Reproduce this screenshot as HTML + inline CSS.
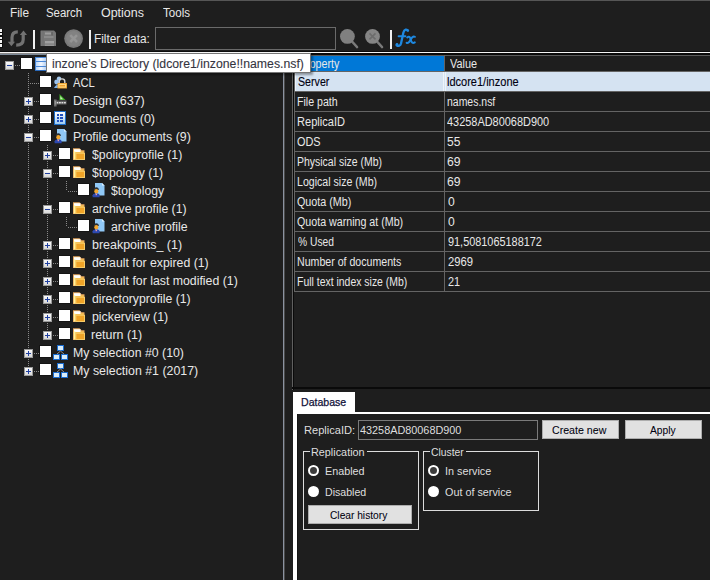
<!DOCTYPE html><html><head><meta charset="utf-8"><style>
*{margin:0;padding:0;box-sizing:content-box}
html,body{width:710px;height:580px;overflow:hidden;background:#1e1e1e}
body{position:relative;font-family:"Liberation Sans", sans-serif;font-size:12px}
.t{position:absolute;line-height:0;white-space:nowrap;transform-origin:0 0}
.sep{position:absolute;top:30px;width:2px;height:19px;background:#f0f0f0}
.grip{position:absolute;left:0;top:29.4px;width:2px;height:19px;background:repeating-linear-gradient(#f4f4f4 0 2.6px,#0e0e0e 2.6px 3.8px);box-shadow:1px 0 #0e0e0e}
.cb{position:absolute;width:11px;height:11px;background:#fff;box-shadow:0 0 0 1px #141414}
.ex{position:absolute;width:7px;height:7px;border:1px solid #9a9a9a;background:linear-gradient(#fafafa,#d8d8d8)}
.mn{position:absolute;left:1px;top:3px;width:5px;height:1px;background:#2040a0}
.pl{position:absolute;left:3px;top:1px;width:1px;height:5px;background:#2040a0}
.vd{position:absolute;width:1px;background:repeating-linear-gradient(#8a8a8a 0 1px,transparent 1px 2px)}
.hd{position:absolute;height:1px;background:repeating-linear-gradient(90deg,#8a8a8a 0 1px,transparent 1px 2px)}
.btn{position:absolute;background:#e1e1e1;border:1px solid #adadad}
</style></head><body><div style="position:absolute;left:0px;top:0px;width:710px;height:1px;background:#565656;"></div>
<div class="t" style="left:9.63px;top:13px;font-size:12px;color:#e8e8e8;transform:scaleX(0.9877);">File</div>
<div class="t" style="left:46.48px;top:13px;font-size:12px;color:#e8e8e8;transform:scaleX(0.9512);">Search</div>
<div class="t" style="left:101.01px;top:13px;font-size:12px;color:#e8e8e8;transform:scaleX(1.0382);">Options</div>
<div class="t" style="left:162.64px;top:13px;font-size:12px;color:#e8e8e8;transform:scaleX(0.9630);">Tools</div>
<div class="grip"></div>
<svg style="position:absolute;left:7px;top:29px" width="21" height="19" viewBox="0 0 21 19">
<path d="M10.8 2.9 Q5 2.9 5 8.5 L5 13.5" stroke="#727272" stroke-width="3.2" fill="none"/>
<path d="M0.8 12.8 L8 12.8 L4.4 17.2 Z" fill="#727272"/>
<path d="M9.2 16.2 Q16.2 16.2 16.2 10.5 L16.2 5.5" stroke="#727272" stroke-width="3.2" fill="none"/>
<path d="M12.8 6 L20 6 L16.5 1.5 Z" fill="#727272"/>
</svg>
<div class="sep" style="left:33px"></div>
<svg style="position:absolute;left:40px;top:30px" width="17" height="17" viewBox="0 0 17 17">
<path d="M0.5 1 Q0.5 0.5 1 0.5 L14 0.5 L16 2.5 L16 15.5 Q16 16 15.5 16 L1 16 Q0.5 16 0.5 15.5 Z" fill="#787878"/>
<rect x="2.5" y="1" width="1" height="15" fill="#6e6e6e"/>
<rect x="5" y="2.5" width="6" height="2" fill="#9c9c9c"/>
<rect x="11.5" y="2" width="1.2" height="3.5" fill="#5e5e5e"/>
<rect x="4" y="6" width="9.5" height="2" fill="#8a8a8a"/>
<rect x="5" y="11" width="9" height="2.5" fill="#a0a0a0"/>
<rect x="5" y="14.5" width="9" height="1.5" fill="#969696"/>
</svg>
<svg style="position:absolute;left:64px;top:29px" width="20" height="20" viewBox="0 0 20 20">
<circle cx="9.6" cy="9.6" r="9.4" fill="#7a7a7a"/>
<circle cx="9.6" cy="9.6" r="7.5" fill="#828282"/>
<path d="M6.2 6.2 L13 13 M13 6.2 L6.2 13" stroke="#959595" stroke-width="2.6"/>
</svg>
<div class="sep" style="left:89px"></div>
<div class="t" style="left:94.43px;top:39px;font-size:12px;color:#e8e8e8;transform:scaleX(0.9850);">Filter data:</div>
<div style="position:absolute;left:155px;top:27px;width:179px;height:21px;border:1px solid #6a6a6a"></div>
<svg style="position:absolute;left:339px;top:28px" width="20" height="21" viewBox="0 0 20 21">
<path d="M13 13.5 L18 19" stroke="#7a7a7a" stroke-width="2.6" stroke-linecap="round"/>
<circle cx="8.4" cy="8.4" r="7.4" fill="#808080"/>
</svg>
<svg style="position:absolute;left:364px;top:28px" width="20" height="21" viewBox="0 0 20 21">
<path d="M13 13.5 L18 19" stroke="#7a7a7a" stroke-width="2.6" stroke-linecap="round"/>
<circle cx="8.5" cy="8.4" r="7.4" fill="#858585"/>
<path d="M5.5 5.4 L11.5 11.4 M11.5 5.4 L5.5 11.4" stroke="#6c6c6c" stroke-width="1.6"/>
</svg>
<div class="sep" style="left:390px"></div>
<svg style="position:absolute;left:386px;top:24px" width="36" height="28" viewBox="0 0 36 28">
<g stroke="#1e88e0" fill="none" stroke-linecap="round">
<path d="M22 6.6 C21 5 18.3 5 17.4 8.5 L15 19.5 C14.4 22 12.3 22.4 10.6 21.2" stroke-width="2.3"/>
<path d="M12.6 12.3 L19.4 12.3" stroke-width="2"/>
<path d="M21.2 13.4 Q23.8 11.2 24.8 15.8 Q25.8 20.2 28.8 18.4" stroke-width="2"/>
<path d="M28.9 12.8 Q26.6 11.8 24.6 15.8 Q22.6 19.8 20.6 18.8" stroke-width="2"/>
</g>
<circle cx="21.6" cy="6.4" r="1.2" fill="#1e88e0"/><circle cx="11" cy="20.4" r="1.4" fill="#1e88e0"/>
</svg>
<div style="position:absolute;left:0px;top:51px;width:710px;height:1px;background:#0c0c0c;"></div>
<div style="position:absolute;left:0px;top:52px;width:710px;height:1px;background:#f4f4f4;"></div>
<div style="position:absolute;left:0px;top:53px;width:294px;height:1px;background:#8a8a8a;"></div>
<div style="position:absolute;left:0px;top:54px;width:283px;height:1px;background:#7d8a98;"></div>
<div style="position:absolute;left:294px;top:53px;width:416px;height:2px;background:#0a0a0a;"></div>
<div style="position:absolute;left:294px;top:55px;width:416px;height:1px;background:#5a5a5a;"></div>
<div style="position:absolute;left:283px;top:53px;width:1px;height:527px;background:#8a92a0;"></div>
<div style="position:absolute;left:284px;top:53px;width:1px;height:527px;background:#4a4a4a;"></div>
<div style="position:absolute;left:292px;top:53px;width:1px;height:337px;background:#606060;"></div>
<div style="position:absolute;left:293px;top:53px;width:1px;height:337px;background:#0a0a0a;"></div>
<div class="vd" style="left:28px;top:73px;height:298px"></div>
<div class="vd" style="left:47px;top:145px;height:190px"></div>
<div class="vd" style="left:66px;top:181px;height:10px"></div>
<div class="vd" style="left:66px;top:217px;height:10px"></div>
<div class="hd" style="left:15px;top:65px;width:5px"></div>
<div class="ex" style="left:5px;top:61px"><div class="mn"></div></div>
<div class="cb" style="left:21px;top:58px"></div>
<div style="position:absolute;left:35px;top:57px;line-height:0"><svg width="12" height="14" viewBox="0 0 12 14"><defs><linearGradient id="gb" x1="0" x2="1"><stop offset="0" stop-color="#b8d4f4"/><stop offset="0.45" stop-color="#f4f8ff"/><stop offset="1" stop-color="#a8c8ee"/></linearGradient></defs><rect x="0" y="0" width="12" height="14" fill="#4a88d8"/>
<rect x="1" y="1" width="11" height="3" fill="url(#gb)"/><rect x="1" y="5" width="11" height="4" fill="url(#gb)"/><rect x="1" y="10" width="11" height="3" fill="url(#gb)"/><rect x="0" y="13" width="12" height="1" fill="#2a68b8"/></svg></div>
<div class="hd" style="left:30px;top:83px;width:9px"></div>
<div class="cb" style="left:40px;top:76px"></div>
<div style="position:absolute;left:54px;top:76px;line-height:0"><svg width="14" height="13" viewBox="0 0 14 13"><circle cx="5" cy="2.6" r="2.2" fill="#a8ccf0"/><circle cx="2.6" cy="6" r="2.4" fill="#98c0ec"/><path d="M0 12 Q2.5 7 6 9 L6 12Z" fill="#7aaee6"/>
<path d="M5.2 7.5 V5.5 A2.8 2.6 0 0 1 10.8 5.5 V7.5" stroke="#d4d4d4" stroke-width="1.4" fill="none"/><rect x="3.5" y="7" width="9.5" height="5.5" fill="#e89a28"/><rect x="4.3" y="7.8" width="7.9" height="3.9" fill="#ffd880"/><rect x="5.5" y="9" width="5.5" height="1.5" fill="#f0a030"/></svg></div>
<div class="t" style="left:73.37px;top:83px;font-size:12px;color:#e8e8e8;transform:scaleX(0.9337);">ACL</div>
<div class="hd" style="left:34px;top:101px;width:5px"></div>
<div class="ex" style="left:24px;top:97px"><div class="mn"></div><div class="pl"></div></div>
<div class="cb" style="left:40px;top:94px"></div>
<div style="position:absolute;left:54px;top:94px;line-height:0"><svg width="13" height="13" viewBox="0 0 13 13"><path d="M5.5 0 L5.5 6 L11.5 6 Z" fill="#40b028"/><path d="M6.3 2 L6.3 5.2 L9 5.2Z" fill="#c8f0b8"/>
<rect x="1" y="6.5" width="11.5" height="4" fill="#606060"/><rect x="2.5" y="8" width="1.8" height="1.4" fill="#e0e0e0"/><rect x="5" y="8" width="1.8" height="1.4" fill="#e0e0e0"/><rect x="7.5" y="8" width="1.8" height="1.4" fill="#e0e0e0"/><rect x="10" y="8" width="1.8" height="1.4" fill="#e0e0e0"/><rect x="0" y="5.5" width="2.6" height="7" fill="#6e6e6e"/><rect x="0.8" y="7" width="1" height="3.5" fill="#a0a0a0"/></svg></div>
<div class="t" style="left:72.58px;top:101px;font-size:12px;color:#e8e8e8;transform:scaleX(1.0451);">Design (637)</div>
<div class="hd" style="left:34px;top:119px;width:5px"></div>
<div class="ex" style="left:24px;top:115px"><div class="mn"></div><div class="pl"></div></div>
<div class="cb" style="left:40px;top:112px"></div>
<div style="position:absolute;left:54px;top:111px;line-height:0"><svg width="13" height="14" viewBox="0 0 13 14"><defs><linearGradient id="gd" x1="0" y1="0" x2="0" y2="1"><stop offset="0" stop-color="#ffffff"/><stop offset="1" stop-color="#9ccaf0"/></linearGradient></defs><rect x="0" y="0" width="12" height="14" fill="#1c6cc8"/><rect x="1" y="1" width="10" height="12" fill="url(#gd)"/>
<rect x="3" y="3" width="2" height="2" fill="#2050c0"/><rect x="6" y="3" width="3" height="2" fill="#2050c0"/><rect x="3" y="6" width="2" height="2" fill="#2050c0"/><rect x="6" y="6" width="3" height="2" fill="#2050c0"/><rect x="3" y="9" width="2" height="2" fill="#2050c0"/><rect x="6" y="9" width="3" height="2" fill="#2050c0"/></svg></div>
<div class="t" style="left:72.58px;top:119px;font-size:12px;color:#e8e8e8;transform:scaleX(1.0420);">Documents (0)</div>
<div class="hd" style="left:34px;top:137px;width:5px"></div>
<div class="ex" style="left:24px;top:133px"><div class="mn"></div></div>
<div class="cb" style="left:40px;top:130px"></div>
<div style="position:absolute;left:54px;top:129px;line-height:0"><svg width="13" height="15" viewBox="0 0 13 15"><path d="M3 0 L10 0 L12.5 2.5 L12.5 12.5 L3 12.5 Z" fill="#90c8f6"/><path d="M10 0 L12.5 2.5 L10 2.5Z" fill="#e0f2ff"/>
<path d="M1.8 7 Q1.8 4.3 4.3 4.3 Q6.8 4.3 6.8 7 Z" fill="#2a3038"/><ellipse cx="4.3" cy="8.3" rx="2" ry="2.4" fill="#f4a830"/>
<path d="M0.6 14.2 L0.6 12.3 Q1 10.8 3 10.6 L5.6 10.6 Q7.4 10.8 7.6 12.3 L7.6 14.2 Z" fill="#2c48b0"/><rect x="3.6" y="10.6" width="1.4" height="1.6" fill="#e89aa8"/></svg></div>
<div class="t" style="left:72.59px;top:137px;font-size:12px;color:#e8e8e8;transform:scaleX(1.0328);">Profile documents (9)</div>
<div class="hd" style="left:53px;top:155px;width:5px"></div>
<div class="ex" style="left:43px;top:151px"><div class="mn"></div><div class="pl"></div></div>
<div class="cb" style="left:59px;top:148px"></div>
<div style="position:absolute;left:73px;top:148px;line-height:0"><svg width="13" height="13" viewBox="0 0 13 13"><path d="M0 0.3 L6.5 0.3 L8.5 2.3 L11.5 2.3 L11.5 12 L0 12 Z" fill="#e8a860"/>
<path d="M1 1.2 L6.2 1.2 L8 3.2 L10.6 3.2 L10.6 11 L1 11 Z" fill="#f6c050"/><rect x="1" y="1.2" width="6.5" height="2.8" fill="#ffffff"/>
<rect x="0.8" y="3.5" width="1.6" height="8" fill="#fff49a"/>
<rect x="2.4" y="4.8" width="9.6" height="7.2" fill="#f8cc68"/><rect x="3.4" y="5.8" width="7.6" height="5.2" fill="#f0a428"/></svg></div>
<div class="t" style="left:91.97px;top:155px;font-size:12px;color:#e8e8e8;transform:scaleX(1.0257);">$policyprofile (1)</div>
<div class="hd" style="left:53px;top:173px;width:5px"></div>
<div class="ex" style="left:43px;top:169px"><div class="mn"></div></div>
<div class="cb" style="left:59px;top:166px"></div>
<div style="position:absolute;left:73px;top:166px;line-height:0"><svg width="13" height="13" viewBox="0 0 13 13"><path d="M0 0.3 L6.5 0.3 L8.5 2.3 L11.5 2.3 L11.5 12 L0 12 Z" fill="#e8a860"/>
<path d="M1 1.2 L6.2 1.2 L8 3.2 L10.6 3.2 L10.6 11 L1 11 Z" fill="#f6c050"/><rect x="1" y="1.2" width="6.5" height="2.8" fill="#ffffff"/>
<rect x="0.8" y="3.5" width="1.6" height="8" fill="#fff49a"/>
<rect x="2.4" y="4.8" width="9.6" height="7.2" fill="#f8cc68"/><rect x="3.4" y="5.8" width="7.6" height="5.2" fill="#f0a428"/></svg></div>
<div class="t" style="left:91.97px;top:173px;font-size:12px;color:#e8e8e8;transform:scaleX(1.0163);">$topology (1)</div>
<div class="hd" style="left:68px;top:191px;width:9px"></div>
<div class="cb" style="left:78px;top:184px"></div>
<div style="position:absolute;left:92px;top:183px;line-height:0"><svg width="13" height="15" viewBox="0 0 13 15"><path d="M3 0 L10 0 L12.5 2.5 L12.5 12.5 L3 12.5 Z" fill="#90c8f6"/><path d="M10 0 L12.5 2.5 L10 2.5Z" fill="#e0f2ff"/>
<path d="M1.8 7 Q1.8 4.3 4.3 4.3 Q6.8 4.3 6.8 7 Z" fill="#2a3038"/><ellipse cx="4.3" cy="8.3" rx="2" ry="2.4" fill="#f4a830"/>
<path d="M0.6 14.2 L0.6 12.3 Q1 10.8 3 10.6 L5.6 10.6 Q7.4 10.8 7.6 12.3 L7.6 14.2 Z" fill="#2c48b0"/><rect x="3.6" y="10.6" width="1.4" height="1.6" fill="#e89aa8"/></svg></div>
<div class="t" style="left:111.07px;top:191px;font-size:12px;color:#e8e8e8;transform:scaleX(1.0216);">$topology</div>
<div class="hd" style="left:53px;top:209px;width:5px"></div>
<div class="ex" style="left:43px;top:205px"><div class="mn"></div></div>
<div class="cb" style="left:59px;top:202px"></div>
<div style="position:absolute;left:73px;top:202px;line-height:0"><svg width="13" height="13" viewBox="0 0 13 13"><path d="M0 0.3 L6.5 0.3 L8.5 2.3 L11.5 2.3 L11.5 12 L0 12 Z" fill="#e8a860"/>
<path d="M1 1.2 L6.2 1.2 L8 3.2 L10.6 3.2 L10.6 11 L1 11 Z" fill="#f6c050"/><rect x="1" y="1.2" width="6.5" height="2.8" fill="#ffffff"/>
<rect x="0.8" y="3.5" width="1.6" height="8" fill="#fff49a"/>
<rect x="2.4" y="4.8" width="9.6" height="7.2" fill="#f8cc68"/><rect x="3.4" y="5.8" width="7.6" height="5.2" fill="#f0a428"/></svg></div>
<div class="t" style="left:91.58px;top:209px;font-size:12px;color:#e8e8e8;transform:scaleX(1.0202);">archive profile (1)</div>
<div class="hd" style="left:68px;top:227px;width:9px"></div>
<div class="cb" style="left:78px;top:220px"></div>
<div style="position:absolute;left:92px;top:219px;line-height:0"><svg width="13" height="15" viewBox="0 0 13 15"><path d="M3 0 L10 0 L12.5 2.5 L12.5 12.5 L3 12.5 Z" fill="#90c8f6"/><path d="M10 0 L12.5 2.5 L10 2.5Z" fill="#e0f2ff"/>
<path d="M1.8 7 Q1.8 4.3 4.3 4.3 Q6.8 4.3 6.8 7 Z" fill="#2a3038"/><ellipse cx="4.3" cy="8.3" rx="2" ry="2.4" fill="#f4a830"/>
<path d="M0.6 14.2 L0.6 12.3 Q1 10.8 3 10.6 L5.6 10.6 Q7.4 10.8 7.6 12.3 L7.6 14.2 Z" fill="#2c48b0"/><rect x="3.6" y="10.6" width="1.4" height="1.6" fill="#e89aa8"/></svg></div>
<div class="t" style="left:110.68px;top:227px;font-size:12px;color:#e8e8e8;transform:scaleX(1.0250);">archive profile</div>
<div class="hd" style="left:53px;top:245px;width:5px"></div>
<div class="ex" style="left:43px;top:241px"><div class="mn"></div><div class="pl"></div></div>
<div class="cb" style="left:59px;top:238px"></div>
<div style="position:absolute;left:73px;top:238px;line-height:0"><svg width="13" height="13" viewBox="0 0 13 13"><path d="M0 0.3 L6.5 0.3 L8.5 2.3 L11.5 2.3 L11.5 12 L0 12 Z" fill="#e8a860"/>
<path d="M1 1.2 L6.2 1.2 L8 3.2 L10.6 3.2 L10.6 11 L1 11 Z" fill="#f6c050"/><rect x="1" y="1.2" width="6.5" height="2.8" fill="#ffffff"/>
<rect x="0.8" y="3.5" width="1.6" height="8" fill="#fff49a"/>
<rect x="2.4" y="4.8" width="9.6" height="7.2" fill="#f8cc68"/><rect x="3.4" y="5.8" width="7.6" height="5.2" fill="#f0a428"/></svg></div>
<div class="t" style="left:91.50px;top:245px;font-size:12px;color:#e8e8e8;transform:scaleX(1.0387);">breakpoints_ (1)</div>
<div class="hd" style="left:53px;top:263px;width:5px"></div>
<div class="ex" style="left:43px;top:259px"><div class="mn"></div><div class="pl"></div></div>
<div class="cb" style="left:59px;top:256px"></div>
<div style="position:absolute;left:73px;top:256px;line-height:0"><svg width="13" height="13" viewBox="0 0 13 13"><path d="M0 0.3 L6.5 0.3 L8.5 2.3 L11.5 2.3 L11.5 12 L0 12 Z" fill="#e8a860"/>
<path d="M1 1.2 L6.2 1.2 L8 3.2 L10.6 3.2 L10.6 11 L1 11 Z" fill="#f6c050"/><rect x="1" y="1.2" width="6.5" height="2.8" fill="#ffffff"/>
<rect x="0.8" y="3.5" width="1.6" height="8" fill="#fff49a"/>
<rect x="2.4" y="4.8" width="9.6" height="7.2" fill="#f8cc68"/><rect x="3.4" y="5.8" width="7.6" height="5.2" fill="#f0a428"/></svg></div>
<div class="t" style="left:91.79px;top:263px;font-size:12px;color:#e8e8e8;transform:scaleX(1.0230);">default for expired (1)</div>
<div class="hd" style="left:53px;top:281px;width:5px"></div>
<div class="ex" style="left:43px;top:277px"><div class="mn"></div><div class="pl"></div></div>
<div class="cb" style="left:59px;top:274px"></div>
<div style="position:absolute;left:73px;top:274px;line-height:0"><svg width="13" height="13" viewBox="0 0 13 13"><path d="M0 0.3 L6.5 0.3 L8.5 2.3 L11.5 2.3 L11.5 12 L0 12 Z" fill="#e8a860"/>
<path d="M1 1.2 L6.2 1.2 L8 3.2 L10.6 3.2 L10.6 11 L1 11 Z" fill="#f6c050"/><rect x="1" y="1.2" width="6.5" height="2.8" fill="#ffffff"/>
<rect x="0.8" y="3.5" width="1.6" height="8" fill="#fff49a"/>
<rect x="2.4" y="4.8" width="9.6" height="7.2" fill="#f8cc68"/><rect x="3.4" y="5.8" width="7.6" height="5.2" fill="#f0a428"/></svg></div>
<div class="t" style="left:91.79px;top:281px;font-size:12px;color:#e8e8e8;transform:scaleX(1.0261);">default for last modified (1)</div>
<div class="hd" style="left:53px;top:299px;width:5px"></div>
<div class="ex" style="left:43px;top:295px"><div class="mn"></div><div class="pl"></div></div>
<div class="cb" style="left:59px;top:292px"></div>
<div style="position:absolute;left:73px;top:292px;line-height:0"><svg width="13" height="13" viewBox="0 0 13 13"><path d="M0 0.3 L6.5 0.3 L8.5 2.3 L11.5 2.3 L11.5 12 L0 12 Z" fill="#e8a860"/>
<path d="M1 1.2 L6.2 1.2 L8 3.2 L10.6 3.2 L10.6 11 L1 11 Z" fill="#f6c050"/><rect x="1" y="1.2" width="6.5" height="2.8" fill="#ffffff"/>
<rect x="0.8" y="3.5" width="1.6" height="8" fill="#fff49a"/>
<rect x="2.4" y="4.8" width="9.6" height="7.2" fill="#f8cc68"/><rect x="3.4" y="5.8" width="7.6" height="5.2" fill="#f0a428"/></svg></div>
<div class="t" style="left:91.79px;top:299px;font-size:12px;color:#e8e8e8;transform:scaleX(1.0204);">directoryprofile (1)</div>
<div class="hd" style="left:53px;top:317px;width:5px"></div>
<div class="ex" style="left:43px;top:313px"><div class="mn"></div><div class="pl"></div></div>
<div class="cb" style="left:59px;top:310px"></div>
<div style="position:absolute;left:73px;top:310px;line-height:0"><svg width="13" height="13" viewBox="0 0 13 13"><path d="M0 0.3 L6.5 0.3 L8.5 2.3 L11.5 2.3 L11.5 12 L0 12 Z" fill="#e8a860"/>
<path d="M1 1.2 L6.2 1.2 L8 3.2 L10.6 3.2 L10.6 11 L1 11 Z" fill="#f6c050"/><rect x="1" y="1.2" width="6.5" height="2.8" fill="#ffffff"/>
<rect x="0.8" y="3.5" width="1.6" height="8" fill="#fff49a"/>
<rect x="2.4" y="4.8" width="9.6" height="7.2" fill="#f8cc68"/><rect x="3.4" y="5.8" width="7.6" height="5.2" fill="#f0a428"/></svg></div>
<div class="t" style="left:91.51px;top:317px;font-size:12px;color:#e8e8e8;transform:scaleX(1.0290);">pickerview (1)</div>
<div class="hd" style="left:53px;top:335px;width:5px"></div>
<div class="ex" style="left:43px;top:331px"><div class="mn"></div><div class="pl"></div></div>
<div class="cb" style="left:59px;top:328px"></div>
<div style="position:absolute;left:73px;top:328px;line-height:0"><svg width="13" height="13" viewBox="0 0 13 13"><path d="M0 0.3 L6.5 0.3 L8.5 2.3 L11.5 2.3 L11.5 12 L0 12 Z" fill="#e8a860"/>
<path d="M1 1.2 L6.2 1.2 L8 3.2 L10.6 3.2 L10.6 11 L1 11 Z" fill="#f6c050"/><rect x="1" y="1.2" width="6.5" height="2.8" fill="#ffffff"/>
<rect x="0.8" y="3.5" width="1.6" height="8" fill="#fff49a"/>
<rect x="2.4" y="4.8" width="9.6" height="7.2" fill="#f8cc68"/><rect x="3.4" y="5.8" width="7.6" height="5.2" fill="#f0a428"/></svg></div>
<div class="t" style="left:91.47px;top:335px;font-size:12px;color:#e8e8e8;transform:scaleX(1.0356);">return (1)</div>
<div class="hd" style="left:34px;top:353px;width:5px"></div>
<div class="ex" style="left:24px;top:349px"><div class="mn"></div><div class="pl"></div></div>
<div class="cb" style="left:40px;top:346px"></div>
<div style="position:absolute;left:53px;top:345px;line-height:0"><svg width="16" height="16" viewBox="0 0 16 16"><rect x="4" y="0" width="7" height="6" fill="#1a6cd0"/><rect x="5" y="1" width="5" height="4" fill="#d8ecfa"/>
<path d="M7.5 6 L4 9 M7.5 6 L11 9" stroke="#aaa" stroke-width="0.8"/>
<rect x="0" y="9" width="7" height="6" fill="#1a6cd0"/><rect x="1" y="10" width="5" height="4" fill="#d8ecfa"/>
<rect x="8" y="9" width="7" height="6" fill="#1a6cd0"/><rect x="9" y="10" width="5" height="4" fill="#d8ecfa"/></svg></div>
<div class="t" style="left:72.59px;top:353px;font-size:12px;color:#e8e8e8;transform:scaleX(1.0271);">My selection #0 (10)</div>
<div class="hd" style="left:34px;top:371px;width:5px"></div>
<div class="ex" style="left:24px;top:367px"><div class="mn"></div><div class="pl"></div></div>
<div class="cb" style="left:40px;top:364px"></div>
<div style="position:absolute;left:53px;top:363px;line-height:0"><svg width="16" height="16" viewBox="0 0 16 16"><rect x="4" y="0" width="7" height="6" fill="#1a6cd0"/><rect x="5" y="1" width="5" height="4" fill="#d8ecfa"/>
<path d="M7.5 6 L4 9 M7.5 6 L11 9" stroke="#aaa" stroke-width="0.8"/>
<rect x="0" y="9" width="7" height="6" fill="#1a6cd0"/><rect x="1" y="10" width="5" height="4" fill="#d8ecfa"/>
<rect x="8" y="9" width="7" height="6" fill="#1a6cd0"/><rect x="9" y="10" width="5" height="4" fill="#d8ecfa"/></svg></div>
<div class="t" style="left:72.59px;top:371px;font-size:12px;color:#e8e8e8;transform:scaleX(1.0312);">My selection #1 (2017)</div>
<div style="position:absolute;left:294px;top:56px;width:150px;height:15px;background:#0078d7;"></div>
<div style="position:absolute;left:444px;top:55px;width:1px;height:237px;background:#646464;"></div>
<div style="position:absolute;left:294px;top:55px;width:1px;height:237px;background:#646464;"></div>
<div class="t" style="left:298.63px;top:64px;font-size:12px;color:#e8e8e8;transform:scaleX(0.8863);">Property</div>
<div class="t" style="left:450.15px;top:64px;font-size:12px;color:#e8e8e8;transform:scaleX(0.9069);">Value</div>
<div style="position:absolute;left:294px;top:71px;width:416px;height:1px;background:#646464;"></div>
<div style="position:absolute;left:295px;top:72px;width:415px;height:19px;background:#d5e3f2;"></div>
<div style="position:absolute;left:295px;top:72px;width:149px;height:19px;background:#d5e3f2;box-shadow:inset 1px 0 #eef4fa,inset -1px 0 #eef4fa"></div>
<div style="position:absolute;left:445px;top:72px;width:265px;height:19px;background:#d5e3f2;box-shadow:inset 1px 0 #eef4fa"></div>
<div class="t" style="left:297.71px;top:82px;font-size:12px;color:#000010;transform:scaleX(0.8873);-webkit-text-stroke:0.12px #000010;">Server</div>
<div class="t" style="left:446.96px;top:82px;font-size:12px;color:#000010;transform:scaleX(0.9177);-webkit-text-stroke:0.12px #000010;">ldcore1/inzone</div>
<div style="position:absolute;left:294px;top:91px;width:416px;height:1px;background:#646464;"></div>
<div class="t" style="left:297.33px;top:102px;font-size:12px;color:#e8e8e8;transform:scaleX(0.8834);">File path</div>
<div class="t" style="left:447.00px;top:102px;font-size:12px;color:#e8e8e8;transform:scaleX(0.8721);">names.nsf</div>
<div style="position:absolute;left:294px;top:111px;width:416px;height:1px;background:#646464;"></div>
<div class="t" style="left:297.30px;top:122px;font-size:12px;color:#e8e8e8;transform:scaleX(0.9215);">ReplicaID</div>
<div class="t" style="left:447.44px;top:122px;font-size:12px;color:#e8e8e8;transform:scaleX(0.9115);">43258AD80068D900</div>
<div style="position:absolute;left:294px;top:131px;width:416px;height:1px;background:#646464;"></div>
<div class="t" style="left:297.28px;top:142px;font-size:12px;color:#e8e8e8;transform:scaleX(0.9084);">ODS</div>
<div class="t" style="left:447.22px;top:142px;font-size:12px;color:#e8e8e8;transform:scaleX(1.0032);">55</div>
<div style="position:absolute;left:294px;top:151px;width:416px;height:1px;background:#646464;"></div>
<div class="t" style="left:297.34px;top:162px;font-size:12px;color:#e8e8e8;transform:scaleX(0.8732);">Physical size (Mb)</div>
<div class="t" style="left:447.08px;top:162px;font-size:12px;color:#e8e8e8;transform:scaleX(1.0189);">69</div>
<div style="position:absolute;left:294px;top:171px;width:416px;height:1px;background:#646464;"></div>
<div class="t" style="left:297.33px;top:182px;font-size:12px;color:#e8e8e8;transform:scaleX(0.8834);">Logical size (Mb)</div>
<div class="t" style="left:447.08px;top:182px;font-size:12px;color:#e8e8e8;transform:scaleX(1.0189);">69</div>
<div style="position:absolute;left:294px;top:191px;width:416px;height:1px;background:#646464;"></div>
<div class="t" style="left:297.29px;top:202px;font-size:12px;color:#e8e8e8;transform:scaleX(0.8961);">Quota (Mb)</div>
<div class="t" style="left:447.63px;top:202px;font-size:12px;color:#e8e8e8;transform:scaleX(1.0105);">0</div>
<div style="position:absolute;left:294px;top:211px;width:416px;height:1px;background:#646464;"></div>
<div class="t" style="left:297.29px;top:222px;font-size:12px;color:#e8e8e8;transform:scaleX(0.8893);">Quota warning at (Mb)</div>
<div class="t" style="left:447.63px;top:222px;font-size:12px;color:#e8e8e8;transform:scaleX(1.0105);">0</div>
<div style="position:absolute;left:294px;top:231px;width:416px;height:1px;background:#646464;"></div>
<div class="t" style="left:297.83px;top:242px;font-size:12px;color:#e8e8e8;transform:scaleX(0.8552);">% Used</div>
<div class="t" style="left:447.59px;top:242px;font-size:12px;color:#e8e8e8;transform:scaleX(0.9073);">91,5081065188172</div>
<div style="position:absolute;left:294px;top:251px;width:416px;height:1px;background:#646464;"></div>
<div class="t" style="left:297.33px;top:262px;font-size:12px;color:#e8e8e8;transform:scaleX(0.8838);">Number of documents</div>
<div class="t" style="left:447.54px;top:262px;font-size:12px;color:#e8e8e8;transform:scaleX(0.9362);">2969</div>
<div style="position:absolute;left:294px;top:271px;width:416px;height:1px;background:#646464;"></div>
<div class="t" style="left:297.35px;top:282px;font-size:12px;color:#e8e8e8;transform:scaleX(0.8705);">Full text index size (Mb)</div>
<div class="t" style="left:447.56px;top:282px;font-size:12px;color:#e8e8e8;transform:scaleX(0.9046);">21</div>
<div style="position:absolute;left:294px;top:291px;width:416px;height:1px;background:#646464;"></div>
<div style="position:absolute;left:292px;top:387px;width:418px;height:2px;background:#0a0a0a;"></div>
<div style="position:absolute;left:46px;top:53px;width:263px;height:18px;background:#fff;border:1px solid #767676;box-shadow:2px 2px 2px rgba(0,0,0,0.35)"></div>
<div class="t" style="left:51.88px;top:64px;font-size:12px;color:#34343e;transform:scaleX(1.0223);-webkit-text-stroke:0.1px #34343e;">inzone's Directory (ldcore1/inzone!!names.nsf)</div>
<div style="position:absolute;left:293px;top:392px;width:62px;height:21px;background:#fff;"></div>
<div class="t" style="left:300.94px;top:402px;font-size:11px;color:#101038;transform:scaleX(0.9606);-webkit-text-stroke:0.25px #101038;">Database</div>
<div style="position:absolute;left:293px;top:412px;width:417px;height:2px;background:#fff;"></div>
<div style="position:absolute;left:293px;top:412px;width:4px;height:168px;background:#fff;"></div>
<div style="position:absolute;left:297px;top:414px;width:1px;height:166px;background:#141414;"></div>
<div class="t" style="left:303.69px;top:430px;font-size:11px;color:#dedede;transform:scaleX(1.0076);">ReplicaID:</div>
<div style="position:absolute;left:358px;top:420px;width:178px;height:18px;border:1px solid #7a7a7a"></div>
<div class="t" style="left:360.05px;top:430px;font-size:11px;color:#dedede;transform:scaleX(0.9865);">43258AD80068D900</div>
<div class="btn" style="left:542px;top:420px;width:75px;height:17px"></div>
<div class="t" style="left:551.96px;top:430px;font-size:11px;color:#000010;transform:scaleX(0.9655);-webkit-text-stroke:0.05px #000;">Create new</div>
<div class="btn" style="left:625px;top:420px;width:75px;height:17px"></div>
<div class="t" style="left:650.18px;top:430px;font-size:11px;color:#000010;transform:scaleX(0.9316);-webkit-text-stroke:0.05px #000;">Apply</div>
<div style="position:absolute;left:303px;top:451px;width:114px;height:77px;border:1px solid #dcdcdc"></div>
<div style="position:absolute;left:310px;top:450px;width:57px;height:3px;background:#1e1e1e;"></div>
<div class="t" style="left:311.31px;top:452px;font-size:11px;color:#dedede;transform:scaleX(0.9848);">Replication</div>
<div style="position:absolute;left:423px;top:451px;width:114px;height:58px;border:1px solid #dcdcdc"></div>
<div style="position:absolute;left:430px;top:450px;width:36px;height:3px;background:#1e1e1e;"></div>
<div class="t" style="left:430.97px;top:452px;font-size:11px;color:#dedede;transform:scaleX(0.9413);">Cluster</div>
<div style="position:absolute;left:308px;top:465px;width:7px;height:7px;border-radius:50%;border:2px solid #fff;background:#3c3c3c"></div>
<div class="t" style="left:325.32px;top:471px;font-size:11px;color:#dedede;transform:scaleX(0.9804);">Enabled</div>
<div style="position:absolute;left:308px;top:486px;width:11px;height:11px;border-radius:50%;background:#fff"></div>
<div class="t" style="left:325.33px;top:492px;font-size:11px;color:#dedede;transform:scaleX(0.9638);">Disabled</div>
<div class="btn" style="left:308px;top:505px;width:102px;height:17px"></div>
<div class="t" style="left:330.28px;top:515px;font-size:11px;color:#000010;transform:scaleX(0.9271);-webkit-text-stroke:0.05px #000;">Clear history</div>
<div style="position:absolute;left:428px;top:465px;width:7px;height:7px;border-radius:50%;border:2px solid #fff;background:#3c3c3c"></div>
<div class="t" style="left:445.20px;top:471px;font-size:11px;color:#dedede;transform:scaleX(0.9833);">In service</div>
<div style="position:absolute;left:428px;top:486px;width:11px;height:11px;border-radius:50%;background:#fff"></div>
<div class="t" style="left:445.19px;top:492px;font-size:11px;color:#dedede;transform:scaleX(0.9813);">Out of service</div></body></html>
